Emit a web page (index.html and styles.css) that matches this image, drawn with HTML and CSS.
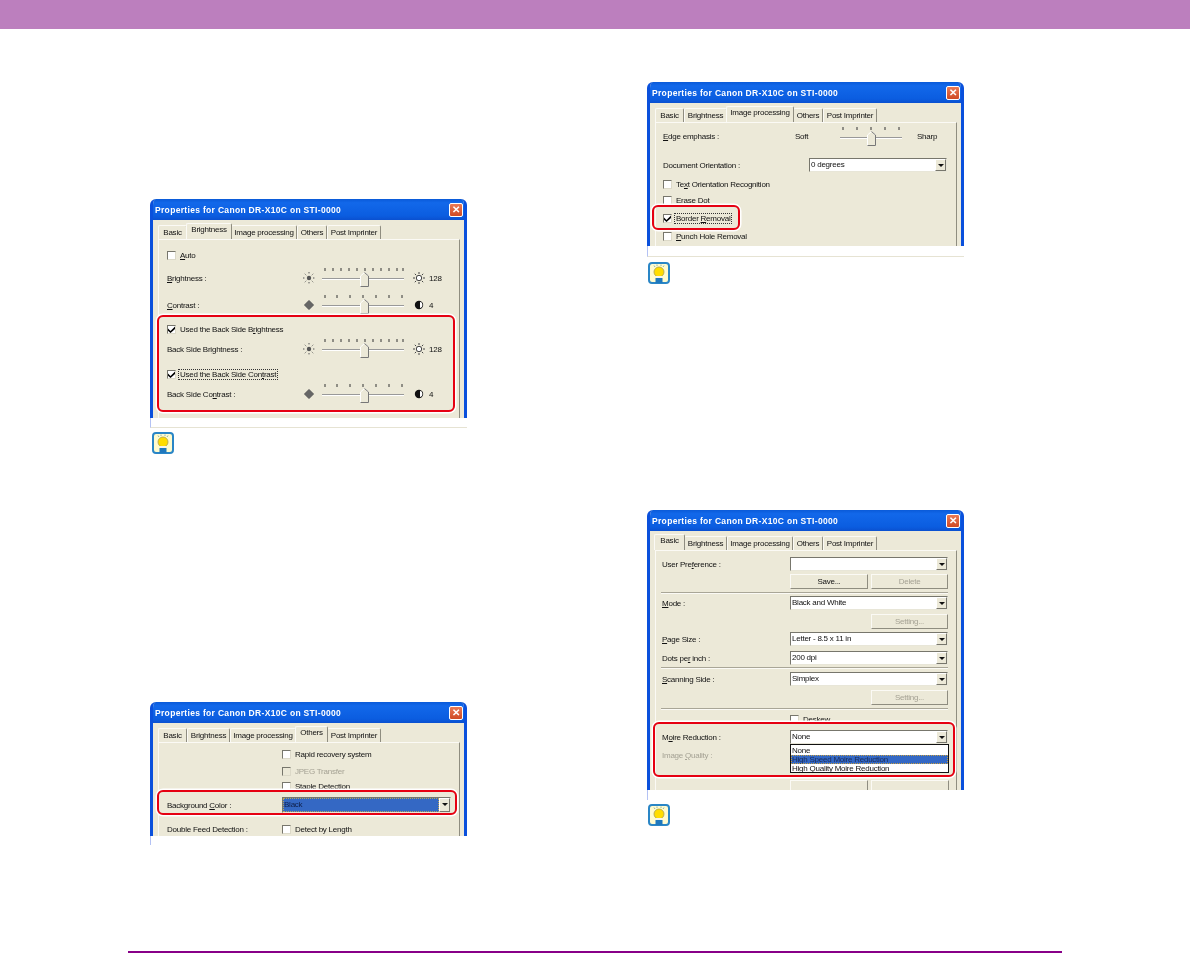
FILE: index.html
```html
<!DOCTYPE html>
<html lang="en">
<head>
<meta charset="utf-8">
<title>Properties for Canon DR-X10C on STI-0000</title>
<link rel="stylesheet" href="styles.css">
</head>
<body>
<svg class="defs" aria-hidden="true">
  <symbol id="chk" viewBox="0 0 7 7"><path d="M0 2.600 2.500 5 7 .5V3L2.500 7 0 4.800Z" fill="#000"/></symbol>
  <symbol id="sun-s" viewBox="0 0 12 12"><circle cx="6" cy="6" r="2.200" fill="#555"/><path d="M6 0v2M6 10v2M0 6h2M10 6h2M1.800 1.800l1.400 1.400M8.800 8.800l1.400 1.400M1.800 10.200l1.400-1.400M8.800 3.200l1.400-1.400" stroke="#555" stroke-dasharray="1 .6" fill="none"/></symbol>
  <symbol id="sun-l" viewBox="0 0 12 12"><circle cx="6" cy="6" r="2.700" fill="#fff" stroke="#444"/><path d="M6 0v2M6 10v2M0 6h2M10 6h2M1.800 1.800l1.400 1.400M8.800 8.800l1.400 1.400M1.800 10.200l1.400-1.400M8.800 3.200l1.400-1.400" stroke="#444" fill="none"/></symbol>
  <symbol id="dia" viewBox="0 0 12 12"><path d="M6 1.500 10.500 6 6 10.500 1.500 6Z" fill="#666" stroke="#555"/></symbol>
  <symbol id="half" viewBox="0 0 12 12"><circle cx="6" cy="6" r="4.200" fill="#111"/><path d="M7 2.800a3.300 3.300 0 0 1 0 6.400Z" fill="#fff"/></symbol>
  <symbol id="thumb" viewBox="0 0 9 15"><path d="M.5 14.500V4L4.500.5 8.500 4V14.500Z" fill="#ece9d8" stroke="#fff"/><path d="M4.500.5 8.500 4V14.500H.5" fill="none" stroke="#777"/></symbol>
  <symbol id="slider-b" viewBox="0 0 82 20"><path d="M3 0v3M11 0v3M19 0v3M27 0v3M35 0v3M43 0v3M51 0v3M59 0v3M67 0v3M75 0v3M81 0v3" stroke="#333"/><path d="M0 10.500H82" stroke="#999"/><path d="M0 11.500H82" stroke="#fff"/><use href="#thumb" x="38" y="4" width="9" height="15"/></symbol>
  <symbol id="slider-c" viewBox="0 0 82 20"><path d="M3 0v3M15 0v3M28 0v3M41 0v3M54 0v3M67 0v3M80 0v3" stroke="#333"/><path d="M0 10.500H82" stroke="#999"/><path d="M0 11.500H82" stroke="#fff"/><use href="#thumb" x="38" y="4" width="9" height="15"/></symbol>
  <symbol id="slider-e" viewBox="0 0 62 20"><path d="M3 0v3M17 0v3M31 0v3M45 0v3M59 0v3" stroke="#333"/><path d="M0 10.500H62" stroke="#999"/><path d="M0 11.500H62" stroke="#fff"/><use href="#thumb" x="27" y="4" width="9" height="15"/></symbol>
  <symbol id="hint" viewBox="0 0 22 22"><rect x="1" y="1" width="20" height="20" rx="3" fill="#fffbcf" stroke="#2a86c6" stroke-width="2"/><path d="M6 3.500 7 5M9 2.500v1.500M13 2.500v1.500M16 3.500l-1 1.500" stroke="#8fb6a8"/><circle cx="11" cy="10" r="5" fill="#ffdd00" stroke="#a9a050" stroke-width=".8"/><rect x="8" y="14" width="6" height="2" fill="#f4f4f0"/><rect x="7.500" y="16" width="7" height="5" fill="#1f78bd"/></symbol>
</svg>

<header class="band"></header>

<main class="page">
  <section class="col col-left">
    <div class="shot">
      <div class="dialog dialog-a">
        <div class="titlebar"><span class="title">Properties for Canon DR-X10C on STI-0000</span><span class="close">✕</span></div>
        <div class="tabs"><span class="tab w-basic">Basic</span><span class="tab w-bright on">Brightness</span><span class="tab w-image">Image processing</span><span class="tab w-others">Others</span><span class="tab w-post">Post Imprinter</span></div>
        <div class="panel pt8">
          <div class="row"><span class="cb"></span><span><u>A</u>uto</span></div>
          <div class="row mt9"><span class="lbl l136"><u>B</u>rightness :</span><svg class="ico"><use href="#sun-s"/></svg><svg class="sl"><use href="#slider-b"/></svg><svg class="ico ico-r"><use href="#sun-l"/></svg><span class="val">128</span></div>
          <div class="row mt13"><span class="lbl l136"><u>C</u>ontrast :</span><svg class="ico"><use href="#dia"/></svg><svg class="sl"><use href="#slider-c"/></svg><svg class="ico ico-r"><use href="#half"/></svg><span class="val">4</span></div>
          <div class="row mt10"><span class="cb"><svg class="tick"><use href="#chk"/></svg></span><span>Used the Back Side B<u>r</u>ightness</span></div>
          <div class="row mt6"><span class="lbl l136">Back Side Bri<u>g</u>htness :</span><svg class="ico"><use href="#sun-s"/></svg><svg class="sl"><use href="#slider-b"/></svg><svg class="ico ico-r"><use href="#sun-l"/></svg><span class="val">128</span></div>
          <div class="row mt11"><span class="cb"><svg class="tick"><use href="#chk"/></svg></span><span class="focus">Used the Back Side Con<u>t</u>rast</span></div>
          <div class="row mt6"><span class="lbl l136">Back Side Co<u>n</u>trast :</span><svg class="ico"><use href="#dia"/></svg><svg class="sl"><use href="#slider-c"/></svg><svg class="ico ico-r"><use href="#half"/></svg><span class="val">4</span></div>
        </div>
      </div>
      <div class="torn torn-a"></div>
      <div class="mark mark-a"></div>
    </div>
    <svg class="hint hint-a"><use href="#hint"/></svg>

    <div class="shot shot-b">
      <div class="dialog dialog-b">
        <div class="titlebar"><span class="title">Properties for Canon DR-X10C on STI-0000</span><span class="close">✕</span></div>
        <div class="tabs"><span class="tab w-basic">Basic</span><span class="tab w-bright">Brightness</span><span class="tab w-image">Image processing</span><span class="tab w-others on">Others</span><span class="tab w-post">Post Imprinter</span></div>
        <div class="panel pt4">
          <div class="row"><span class="lbl l115"></span><span class="cb"></span><span>Rapid recovery system</span></div>
          <div class="row mt3 off"><span class="lbl l115"></span><span class="cb cb-off"></span><span>JPEG Transfer</span></div>
          <div class="row mt1"><span class="lbl l115"></span><span class="cb"></span><span>Staple Detection</span></div>
          <div class="row mt5"><span class="lbl l115">Background <u>C</u>olor :</span><span class="combo w169 sel"><span class="combo-text">Black</span><span class="arrow"></span></span></div>
          <div class="row mt10"><span class="lbl l115">Double Feed Detection :</span><span class="cb"></span><span>Detect by Length</span></div>
        </div>
      </div>
      <div class="torn torn-b"></div>
      <div class="mark mark-b"></div>
    </div>
  </section>

  <section class="col col-right">
    <div class="shot">
      <div class="dialog dialog-c">
        <div class="titlebar"><span class="title">Properties for Canon DR-X10C on STI-0000</span><span class="close">✕</span></div>
        <div class="tabs"><span class="tab w-basic">Basic</span><span class="tab w-bright">Brightness</span><span class="tab w-image on">Image processing</span><span class="tab w-others">Others</span><span class="tab w-post">Post Imprinter</span></div>
        <div class="panel panel-c pt6">
          <div class="row"><span class="lbl l132"><u>E</u>dge emphasis :</span><span class="lbl l45">Soft</span><svg class="sl-e"><use href="#slider-e"/></svg><span class="sharp">Sharp</span></div>
          <div class="row mt15"><span class="lbl l146">Document Orientation :</span><span class="combo w138"><span class="combo-text">0 degrees</span><span class="arrow"></span></span></div>
          <div class="row mt5"><span class="cb"></span><span>Te<u>x</u>t Orientation Recognition</span></div>
          <div class="row mt2"><span class="cb"></span><span>Erase Dot</span></div>
          <div class="row mt4"><span class="cb"><svg class="tick"><use href="#chk"/></svg></span><span class="focus">Border <u>R</u>emoval</span></div>
          <div class="row mt4"><span class="cb"></span><span><u>P</u>unch Hole Removal</span></div>
        </div>
      </div>
      <div class="torn torn-c"></div>
      <div class="mark mark-c"></div>
    </div>
    <svg class="hint hint-c"><use href="#hint"/></svg>

    <div class="shot shot-d">
      <div class="dialog dialog-d">
        <div class="titlebar"><span class="title">Properties for Canon DR-X10C on STI-0000</span><span class="close">✕</span></div>
        <div class="tabs"><span class="tab w-basic on">Basic</span><span class="tab w-bright">Brightness</span><span class="tab w-image">Image processing</span><span class="tab w-others">Others</span><span class="tab w-post">Post Imprinter</span></div>
        <div class="panel panel-d pt6">
          <div class="row"><span class="lbl l128">User Pre<u>f</u>erence :</span><span class="combo w158"><span class="combo-text"></span><span class="arrow"></span></span></div>
          <div class="row mt3"><span class="lbl l128"></span><span class="btn">Save...</span><span class="btn btn-off">Delete</span></div>
          <div class="sep mt4"></div>
          <div class="row mt2"><span class="lbl l128"><u>M</u>ode :</span><span class="combo w158"><span class="combo-text">Black and White</span><span class="arrow"></span></span></div>
          <div class="row mt4"><span class="lbl l128"></span><span class="btn btn-ghost"></span><span class="btn btn-off">Setting...</span></div>
          <div class="row mt4"><span class="lbl l128"><u>P</u>age Size :</span><span class="combo w158"><span class="combo-text">Letter - 8.5 x 11 in</span><span class="arrow"></span></span></div>
          <div class="row mt5"><span class="lbl l128">Dots pe<u>r</u> inch :</span><span class="combo w158"><span class="combo-text">200 dpi</span><span class="arrow"></span></span></div>
          <div class="sep mt2"></div>
          <div class="row mt3"><span class="lbl l128"><u>S</u>canning Side :</span><span class="combo w158"><span class="combo-text">Simplex</span><span class="arrow"></span></span></div>
          <div class="row mt4"><span class="lbl l128"></span><span class="btn btn-ghost"></span><span class="btn btn-off">Setting...</span></div>
          <div class="sep mt4"></div>
          <div class="row mt2"><span class="lbl l128"></span><span class="cb"></span><span>Deskew</span></div>
          <div class="row mt4"><span class="lbl l128">M<u>o</u>ire Reduction :</span>
            <span class="combo w158"><span class="combo-text">None</span><span class="arrow"></span>
              <span class="list"><span class="opt">None</span><span class="opt opt-on">High Speed Moire Reduction</span><span class="opt">High Quality Moire Reduction</span></span>
            </span>
          </div>
          <div class="row mt4 off"><span class="lbl l128">Image <u>Q</u>uality :</span></div>
          <div class="row mt18"><span class="lbl l128"></span><span class="btn"></span><span class="btn"></span></div>
        </div>
      </div>
      <div class="torn torn-d"></div>
      <div class="mark mark-d"></div>
    </div>
    <svg class="hint hint-d"><use href="#hint"/></svg>
  </section>
</main>

<footer class="rule"></footer>
</body>
</html>
```
FILE: styles.css
```css
* { box-sizing: border-box; }
html, body { margin: 0; padding: 0; }
body {
  width: 1190px;
  height: 953px;
  background: #fff;
  display: flex;
  flex-direction: column;
  overflow: hidden;
  font-family: "Liberation Sans", Arial, sans-serif;
  font-size: 8px;
  letter-spacing: -.24px;
  color: #111;
}
.defs { position: absolute; width: 0; height: 0; }
.band { height: 29px; flex: none; background: #bc7fbe; }
.page { flex: 1; display: flex; }
.col { display: flex; flex-direction: column; align-items: flex-start; }
.col-left { margin-left: 150px; width: 497px; padding-top: 170px; }
.col-right { width: 317px; padding-top: 53px; }
.rule { height: 2px; flex: none; margin: 0 128px; background: #880088; }

.shot { position: relative; width: 317px; filter: blur(.45px); }
.shot-b { margin-top: 248px; }
.shot-d { margin-top: 226px; }

.dialog {
  width: 317px;
  overflow: hidden;
  background: #ece9d8;
  border: solid #0a50dc;
  border-width: 0 3px;
  border-radius: 6px 6px 0 0;
}
.dialog-a { height: 219px; }
.dialog-b { height: 134px; }
.dialog-c { height: 164px; }
.dialog-d { height: 280px; }

.titlebar {
  height: 21px;
  margin: 0 -3px;
  padding: 0 4px 0 5px;
  display: flex;
  align-items: center;
  justify-content: space-between;
  background: linear-gradient(180deg, #0a5ad8 0%, #1268ea 18%, #0b5de0 80%, #0a50d0 100%);
}
.title {
  font-weight: 700;
  font-size: 8.5px;
  letter-spacing: .32px;
  color: #fff;
  white-space: nowrap;
}
.close {
  width: 14px;
  height: 14px;
  border: 1px solid #fff;
  border-radius: 2px;
  background: linear-gradient(180deg, #ea7a55, #cf4a24);
  color: #fff;
  font-size: 10px;
  font-weight: 700;
  line-height: 12px;
  text-align: center;
}

.tabs { height: 19px; margin-left: 5px; display: flex; align-items: flex-end; }
.tab {
  height: 14px;
  border: 1px solid #fbfaf5;
  border-bottom: 0;
  border-right: 1px solid #8f8d80;
  border-radius: 2px 2px 0 0;
  text-align: center;
  line-height: 13px;
  white-space: nowrap;
}
.tab.on {
  height: 16px;
  margin: 0 -1px 0 -1px;
  line-height: 12px;
  background: #ece9d8;
  position: relative;
  z-index: 1;
}
.w-basic { width: 29px; }
.w-bright { width: 43px; }
.w-image { width: 66px; }
.w-others { width: 30px; }
.w-post { width: 54px; }
.w-bright.on { width: 46px; }
.w-image.on { width: 68px; }
.w-others.on { width: 33px; }
.w-basic.on { width: 31px; }

.panel {
  width: 302px;
  height: 300px;
  margin-left: 5px;
  padding-left: 8px;
  border: 1px solid #fbfaf5;
  border-right: 1px solid #8f8d80;
}
.panel-c { padding-left: 7px; }
.panel-d { padding-left: 6px; }
.pt4 { padding-top: 4px; }
.pt6 { padding-top: 6px; }
.pt8 { padding-top: 8px; }

.row { height: 14px; display: flex; align-items: center; white-space: nowrap; }
.off { color: #a5a294; }
.mt1 { margin-top: 1px; }
.mt2 { margin-top: 2px; }
.mt3 { margin-top: 3px; }
.mt4 { margin-top: 4px; }
.mt5 { margin-top: 5px; }
.mt6 { margin-top: 6px; }
.mt9 { margin-top: 9px; }
.mt10 { margin-top: 10px; }
.mt11 { margin-top: 11px; }
.mt13 { margin-top: 13px; }
.mt15 { margin-top: 15px; }
.mt18 { margin-top: 18px; }

.lbl { flex: none; }
.l45 { width: 45px; }
.l115 { width: 115px; }
.l128 { width: 128px; }
.l132 { width: 132px; }
.l136 { width: 136px; }
.l146 { width: 146px; }

.cb {
  flex: none;
  width: 9px;
  height: 9px;
  margin-right: 4px;
  background: #fff;
  border: 1px solid;
  border-color: #77766c #dcd9c8 #dcd9c8 #77766c;
  display: flex;
}
.cb-off { background: #ece9d8; }
.tick { width: 7px; height: 7px; }
.focus { outline: 1px dotted #333; outline-offset: 0; padding: 0 1px; margin-left: -1px; }

.ico { flex: none; width: 12px; height: 12px; }
.sl { flex: none; width: 82px; height: 20px; margin-left: 7px; }
.sl-e { flex: none; width: 62px; height: 20px; margin-top: 2px; }
.ico-r { margin-left: 9px; }
.val { margin-left: 4px; }
.sharp { margin-left: 15px; }

.combo {
  position: relative;
  flex: none;
  height: 14px;
  display: flex;
  align-items: center;
  background: #fff;
  border: 1px solid;
  border-color: #77766c #e8e6d8 #e8e6d8 #77766c;
}
.w138 { width: 138px; }
.w158 { width: 158px; }
.w169 { width: 169px; height: 16px; }
.combo-text { flex: 1; padding-left: 1px; line-height: 12px; }
.sel .combo-text { height: 100%; line-height: 14px; background: #3468c4; color: #10204a; outline: 1px dotted #b9a45c; outline-offset: -1px; }
.arrow {
  flex: none;
  position: relative;
  width: 11px;
  height: 100%;
  background: #ece9d8;
  border: 1px solid;
  border-color: #fff #77766c #77766c #fff;
}
.arrow::after {
  content: "";
  position: absolute;
  left: 2px;
  top: 4px;
  border: 3px solid transparent;
  border-top: 3px solid #111;
  border-bottom: 0;
}
.list {
  position: absolute;
  z-index: 2;
  left: -1px;
  top: 13px;
  width: 159px;
  height: 29px;
  padding-top: 1px;
  background: #fff;
  border: 1px solid #111;
  display: flex;
  flex-direction: column;
}
.opt { height: 9px; line-height: 9px; padding-left: 1px; }
.opt-on { background: #3468c4; color: #1a2c58; outline: 1px dotted #c9a040; outline-offset: -1px; }

.btn {
  flex: none;
  width: 78px;
  height: 15px;
  margin-right: 3px;
  text-align: center;
  line-height: 13px;
  border: 1px solid;
  border-color: #fbfaf5 #8f8d80 #8f8d80 #fbfaf5;
}
.btn-off { width: 77px; color: #a5a294; }
.btn-ghost { visibility: hidden; }
.sep { width: 287px; height: 2px; margin-left: -1px; border-top: 1px solid #a9a697; border-bottom: 1px solid #fbfaf5; }

.torn { border-left: 1px solid #b4c2f4; border-bottom: 1px solid #e6e3d3; }
.torn-a { height: 10px; }
.torn-b { height: 9px; border-bottom: 0; }
.torn-c { height: 11px; }
.torn-d { height: 10px; border-bottom: 0; }

.mark {
  position: absolute;
  border: 2px solid #e60012;
  border-radius: 6px;
  box-shadow: 0 0 0 1.5px #fff;
}
.mark-a { left: 7px; top: 116px; width: 298px; height: 97px; }
.mark-b { left: 7px; top: 88px; width: 300px; height: 25px; }
.mark-c { left: 5px; top: 123px; width: 88px; height: 25px; }
.mark-d { left: 6px; top: 212px; width: 302px; height: 55px; }

.hint { width: 22px; height: 22px; flex: none; filter: blur(.3px); margin-left: 2px; }
.hint-a { margin-top: 4px; }
.hint-c { margin-left: 1px; margin-top: 5px; }
.hint-d { margin-left: 1px; margin-top: 4px; }
```
